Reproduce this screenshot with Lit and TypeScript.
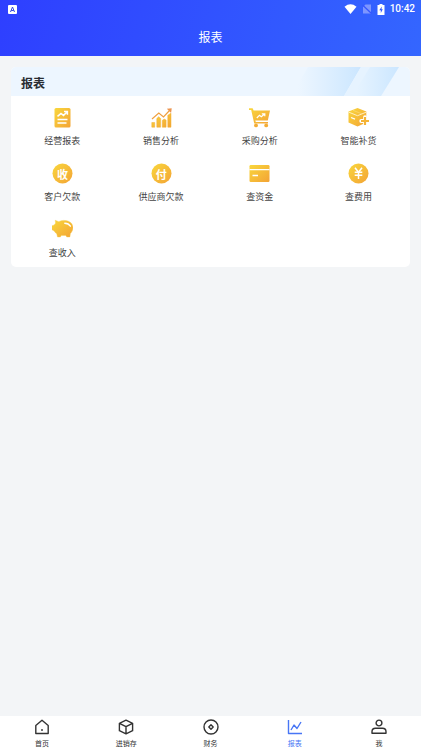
import { LitElement, html, svg, css } from "lit";
import { customElement, property, state } from "lit/decorators.js";
import { classMap } from "lit/directives/class-map.js";

const gold = svg`<defs><linearGradient id="g" x1="0" y1="0" x2="1" y2="1">
  <stop offset="0" stop-color="#f9d73c"/><stop offset="1" stop-color="#f3a335"/></linearGradient></defs>`;

const reportIcons: Record<string, unknown> = {
  report: svg`<rect x="2.5" y="1" width="16" height="19.5" rx="1.5" fill="url(#g)"/>
    <path d="M5.5 9.4 9 6.4l2.5 2L15 5M12 4.6h3.4v3.2" fill="none" stroke="#fff" stroke-width="1.5"/>
    <path d="M5.5 12.5h10M5.5 16h9" stroke="#fff" stroke-width="1.7"/>`,
  bars: svg`<path d="M.8 15.5h2.9v4.7H.8zM5.8 11.5l1.9-1.8 1.9 1.8v8.7H5.8zM11.3 13.4l1.9-1.3 1.9 1v7.1h-3.8zM16.8 8.2l3.2-2v14h-3.2z" fill="url(#g)" stroke="#f3b132" stroke-width=".5" stroke-linejoin="round"/>
    <path d="M1 12 7.8 6l4.7 4L19 3" fill="none" stroke="#f0a040" stroke-width="1.2"/>
    <path d="M15.8 1.8l4.9-.6-.6 4.8z" fill="#ec9550"/>`,
  cart: svg`<path d="M0 1.2h3.6l1 2.3H21l-2.2 10H6.3l.5 1.6H19v1.5H5.2L2.2 3H0z" fill="url(#g)"/>
    <path d="M7.8 11l2.7-2.8 1.8 1.5 3-2.5M12.8 6.8h3v2.5" fill="none" stroke="#fff" stroke-width="1.2"/>
    <circle cx="7" cy="18.4" r="1.9" fill="#f4ac34"/><circle cx="17.2" cy="18.4" r="1.9" fill="#f4ac34"/>`,
  box: svg`<path d="M9.5 1 18.3 4.6v11L9.5 19.6.5 15.5V4.6z" fill="url(#g)"/>
    <path d="M.8 5.2 9.5 8.7l8.7-3.5" fill="none" stroke="#fff3cf" stroke-width=".9"/>
    <path d="M5 3.3l8.800 3.500" stroke="#fdeaa8" stroke-width=".4"/>
    <path d="M3 10.5l4 1.600" stroke="#fff" stroke-width="1.3"/>
    <path d="M17 10.200v7.600M13.200 14H21" stroke="#fff" stroke-width="3.800" stroke-linecap="round"/>
    <path d="M17 10v8M13 14h8" stroke="#f5b436" stroke-width="2.200"/>`,
  coin: svg`<circle cx="10.5" cy="10.5" r="10" fill="url(#g)"/>`,
  card: svg`<rect x=".5" y="2" width="20" height="17" rx="1.2" fill="url(#g)"/>
    <path d="M.5 6.600h20" stroke="#fff" stroke-width="1.3"/><path d="M3.500 12.500H9" stroke="#fff" stroke-width="1.6"/>`,
  yen: svg`<circle cx="10.5" cy="10.5" r="10" fill="url(#g)"/>
    <path d="M7 4.700l3.500 4.500L14 4.700M6.700 9.300h7.600M6.700 12.300h7.600M10.500 9v7" fill="none" stroke="#fff" stroke-width="1.5"/>`,
  pig: svg`<path d="M3.200 1.300 6.800 2.700C8.800 1.600 11 1.200 13.300 1.500c4.600.5 7.700 3.200 7.700 7.100 0 2.400-1 4.400-2.600 5.900l-.5 3.500h-3.200l-.8-1.600H9.200L8.400 18H5.500l-.8-3.300C3.500 13.900 2.700 13 2.200 12L0 10.800V6.800l2.300-.9c.3-.7.700-1.200 1.300-1.700z" fill="url(#g)" stroke="#f8cd48" stroke-width=".4" stroke-linejoin="round"/>
    <path d="M12.800 4.200q3.800 0 5.600 3" fill="none" stroke="#fff" stroke-width="1.4" stroke-linecap="round"/>`,
};

const tabIcons: Record<string, unknown> = {
  home: svg`<path d="M1.800 6.500 8 1.300l6.200 5.200v8H1.800z"/><path d="M8 10v2"/>`,
  cube: svg`<path d="M8 1.200 14.600 4.300v7.400L8 14.800 1.400 11.700V4.300zM1.400 4.400 8 7.700l6.600-3.300M8 7.700v7"/>`,
  disc: svg`<circle cx="8" cy="8" r="7"/><path d="M8 5.800 10.200 8 8 10.200 5.800 8z"/>`,
  chart: svg`<path d="M1.500 1v13.500H15M4 11l3-5 3 3.500L14 3"/>`,
  user: svg`<circle cx="8" cy="4" r="2.9"/><path d="M1 14.300v-1.600c0-2.200 1.300-3.400 3.500-3.400h7c2.200 0 3.500 1.200 3.500 3.400v1.600z"/>`,
};

@customElement("report-item")
class ReportItem extends LitElement {
  @property() icon = "";
  @property() label = "";
  @property() glyph = "";

  static styles = css`
    :host { display: block; }
    .item {
      display: flex; flex-direction: column; align-items: center; gap: 6px;
      width: 100%; height: 56px; padding: 11px 0 0; border: 0; background: none;
      color: #444; font: 9px/14px "Noto Sans CJK SC", sans-serif; cursor: pointer;
    }
    .icon { display: grid; place-items: center; }
    .icon > * { grid-area: 1 / 1; }
    .pic { width: 21px; height: 21px; }
    .glyph { color: #fff; font-size: 11px; font-weight: 700; line-height: 20px; }
  `;

  render() {
    return html`<button class="item" type="button">
      <span class="icon">
        <svg class="pic" viewBox="0 0 21 21" aria-hidden="true">${gold}${reportIcons[this.icon]}</svg>
        ${this.glyph ? html`<span class="glyph">${this.glyph}</span>` : ""}
      </span>
      <span>${this.label}</span>
    </button>`;
  }
}

@customElement("app-root")
class AppRoot extends LitElement {
  @state() private tab = "报表";

  private items = [
    ["report", "经营报表"], ["bars", "销售分析"], ["cart", "采购分析"], ["box", "智能补货"],
    ["coin", "客户欠款", "收"], ["coin", "供应商欠款", "付"], ["card", "查资金"], ["yen", "查费用"],
    ["pig", "查收入"],
  ];

  private tabs = [["home", "首页"], ["cube", "进销存"], ["disc", "财务"], ["chart", "报表"], ["user", "我"]];

  static styles = css`
    :host {
      display: flex; flex-direction: column; min-height: 100vh;
      background: #f3f5f7; font-family: "Noto Sans CJK SC", sans-serif;
    }
    h1, h2 { margin: 0; }
    .top { background: linear-gradient(105deg, #2e3fff, #3466ff); color: #fff; }
    .status { display: flex; align-items: center; height: 18px; padding: 0 6px 0 8px; }
    .status svg { display: block; }
    .right { display: flex; align-items: center; gap: 5px; margin-left: auto; }
    .time { font: 500 10px/18px Roboto, sans-serif; }
    .title { height: 38px; font-size: 12px; font-weight: 400; line-height: 38px; text-align: center; }
    .main { flex: 1; padding: 11px; }
    .card { overflow: hidden; border-radius: 5px; background: #fff; }
    .head { position: relative; height: 29px; padding: 0 10px; background: #edf6ff; }
    .name { position: relative; color: #2a2d33; font-size: 12px; font-weight: 700; line-height: 31px; }
    .shine { position: absolute; top: 0; right: 0; width: 120px; height: 29px; }
    .grid { display: grid; grid-template-columns: repeat(4, 1fr); padding: 0 2px 3px; }
    .tabs { display: flex; height: 34px; background: #fff; }
    .tab {
      flex: 1; display: flex; flex-direction: column; align-items: center; gap: 3px;
      padding: 3px 0 0; border: 0; background: none; color: #333;
      font: 7px/10px "Noto Sans CJK SC", sans-serif; cursor: pointer;
    }
    .tab svg { width: 16px; height: 16px; fill: none; stroke: currentColor; stroke-width: 1.4; stroke-linejoin: round; }
    .active { color: #4876f5; }
  `;

  render() {
    return html`
      <header class="top">
        <div class="status">
          <svg width="9" height="9" viewBox="0 0 9 9" aria-hidden="true">
            <rect width="9" height="9" rx="1" fill="#fff"/>
            <path d="M2.500 7 4.500 2l2 5M3.200 5.500h2.600" fill="none" stroke="#3448e0"/>
          </svg>
          <div class="right">
            <svg width="13" height="11" viewBox="0 0 13 11" aria-hidden="true">
              <path d="M.5 2.700Q6.500-2 12.500 2.700L6.500 10z" fill="#fff"/>
            </svg>
            <svg width="10" height="10" viewBox="0 0 10 10" aria-hidden="true">
              <path d="M3.500.5H9V9.500H1V3z" fill="#8ba0ff" opacity=".85"/>
              <path d="M.5 1l9 8.500" stroke="#3454ff" stroke-width="1.200"/>
            </svg>
            <svg width="8" height="11" viewBox="0 0 8 11" aria-hidden="true">
              <path d="M2.500 0h3v1H7.500v10H.5V1h2z" fill="#fff"/>
              <path d="M4.800 2.500 2.300 6.300h1.500V9l2-3.800H4.500z" fill="#3159ff"/>
            </svg>
            <span class="time">10:42</span>
          </div>
        </div>
        <h1 class="title">报表</h1>
      </header>
      <main class="main">
        <section class="card">
          <div class="head">
            <svg class="shine" viewBox="0 0 120 29" aria-hidden="true">
              <defs>
                <linearGradient id="a"><stop offset=".1" stop-color="#cde8ff" stop-opacity="0"/><stop offset="1" stop-color="#cbe6ff"/></linearGradient>
              </defs>
              <path d="M18 0H71L54 29H1z" fill="url(#a)"/>
              <path d="M71 0H109L91 29H54z" fill="#e6f3ff"/>
              <path d="M80 0H109L91 29H62z" fill="url(#a)"/>
            </svg>
            <h2 class="name">报表</h2>
          </div>
          <div class="grid">
            ${this.items.map(([icon, label, glyph]) => html`
              <report-item .icon=${icon} .label=${label} .glyph=${glyph ?? ""}></report-item>`)}
          </div>
        </section>
      </main>
      <nav class="tabs">
        ${this.tabs.map(([icon, label]) => html`
          <button type="button" class=${classMap({ tab: true, active: this.tab === label })}
            @click=${() => { this.tab = label; }}>
            <svg viewBox="0 0 16 16" aria-hidden="true">${tabIcons[icon]}</svg>
            <span>${label}</span>
          </button>`)}
      </nav>`;
  }
}
